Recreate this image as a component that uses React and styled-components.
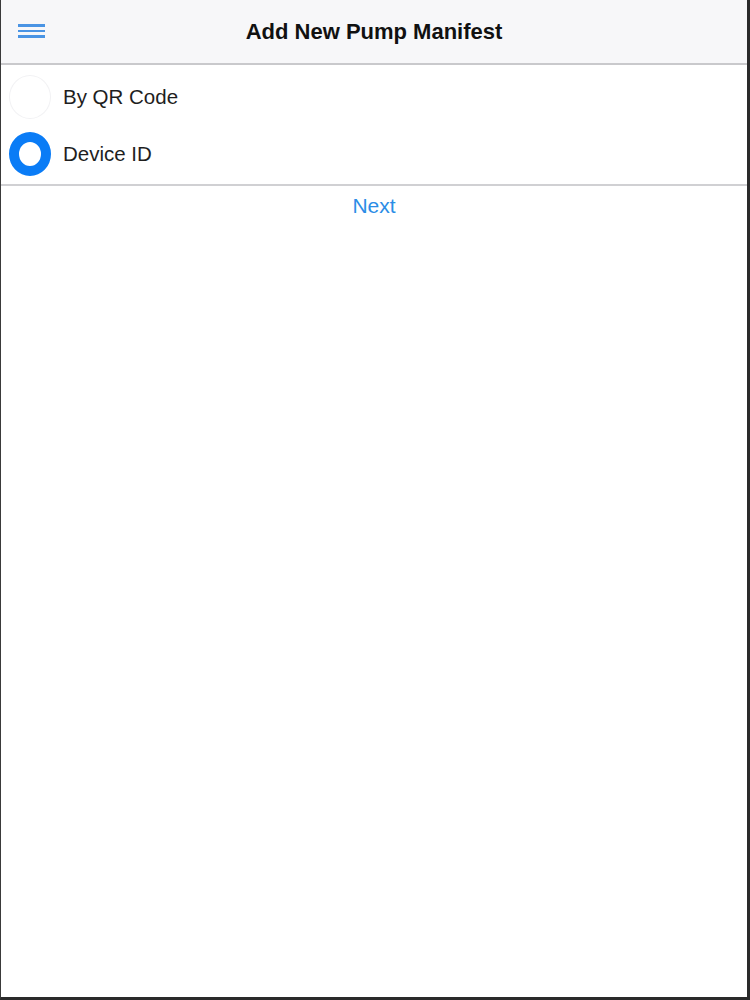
import React, { useState } from 'react';
import styled, { createGlobalStyle } from 'styled-components';

const GlobalStyle = createGlobalStyle`
  html, body {
    margin: 0;
    padding: 0;
    background: #ffffff;
  }
  body {
    font-family: "Liberation Sans", Arial, sans-serif;
  }
`;

const Frame = styled.div`
  box-sizing: border-box;
  width: 750px;
  height: 1000px;
  border-left: 1px solid #3a3a3a;
  border-right: 3px solid #2a2a2a;
  border-bottom: 3px solid #2a2a2a;
  background: #ffffff;
  display: flex;
  flex-direction: column;
`;

const Header = styled.header`
  position: relative;
  height: 63px;
  flex-shrink: 0;
  display: flex;
  align-items: center;
  justify-content: center;
  background: #f7f7f9;
  border-bottom: 2px solid #c9c9cc;
`;

const MenuButton = styled.button`
  position: absolute;
  left: 17px;
  top: 23px;
  width: 28px;
  height: 16px;
  padding: 0;
  border: none;
  background: transparent;
  display: flex;
  flex-direction: column;
  justify-content: center;
  gap: 3px;
  cursor: pointer;
`;

const MenuLine = styled.span`
  display: block;
  height: 2.5px;
  width: 27px;
  background: #4a94e4;
`;

const Title = styled.h1`
  margin: 0;
  font-size: 22px;
  font-weight: 700;
  color: #111111;
`;

const OptionList = styled.div`
  display: flex;
  flex-direction: column;
  padding: 3px 0 2px;
  border-bottom: 2px solid #d0d0d3;
`;

const OptionRow = styled.label`
  display: flex;
  align-items: center;
  gap: 12px;
  height: 57px;
  padding-left: 8px;
  cursor: pointer;
`;

const Radio = styled.span`
  box-sizing: border-box;
  width: 42px;
  height: 44px;
  border-radius: 50%;
  flex-shrink: 0;
  border: ${(p) => (p.$checked ? '10px solid #0a7cf6' : '1px solid #f2f2f4')};
  background: #ffffff;
`;

const OptionText = styled.span`
  font-size: 20.5px;
  color: #1e1e1e;
`;

const Footer = styled.div`
  display: flex;
  justify-content: center;
  padding-top: 8px;
`;

const NextLink = styled.button`
  border: none;
  background: transparent;
  padding: 0;
  font-family: "Liberation Sans", Arial, sans-serif;
  font-size: 21px;
  color: #2b8de6;
  cursor: pointer;
`;

const options = [
  { id: 'qr', label: 'By QR Code' },
  { id: 'device', label: 'Device ID' },
];

export default function App() {
  const [selected, setSelected] = useState('device');

  return (
    <>
      <GlobalStyle />
      <Frame>
        <Header>
          <MenuButton aria-label="Menu">
            <MenuLine />
            <MenuLine />
            <MenuLine />
          </MenuButton>
          <Title>Add New Pump Manifest</Title>
        </Header>
        <OptionList>
          {options.map((o) => (
            <OptionRow key={o.id} onClick={() => setSelected(o.id)}>
              <Radio $checked={selected === o.id} />
              <OptionText>{o.label}</OptionText>
            </OptionRow>
          ))}
        </OptionList>
        <Footer>
          <NextLink>Next</NextLink>
        </Footer>
      </Frame>
    </>
  );
}
